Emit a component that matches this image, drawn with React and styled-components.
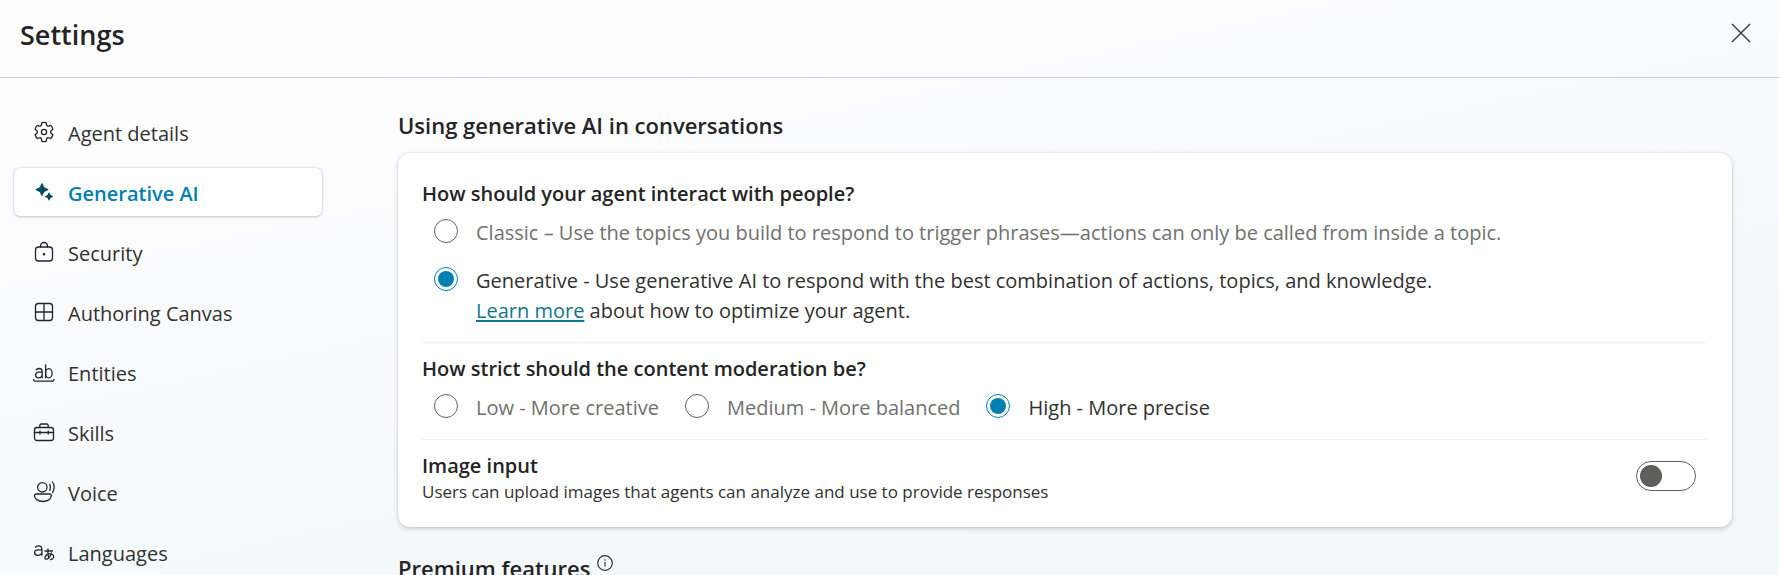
import React, { useState } from "react";
import styled, { createGlobalStyle } from "styled-components";

const color = {
  text: "#242424",
  body: "#323130",
  muted: "#707070",
  brand: "#0080ae",
  link: "#11758f",
  divider: "#f0f0f0",
};

const strong = 600;

const GlobalStyle = createGlobalStyle`
  *, *::before, *::after { box-sizing: border-box; }
  body {
    margin: 0;
    font-family: "Segoe UI", "Open Sans", "Noto Sans", sans-serif;
    font-size: 20px;
    line-height: 30px;
    color: ${color.body};
  }
`;

const Page = styled.div`
  height: 100vh;
  overflow: auto;
  scrollbar-width: none;
  background: linear-gradient(168deg, #fefefe 0%, #fcfcfe 24%, #f9fafe 46%, #f5f9fc 66%, #f2f7fa 100%);
`;

const Header = styled.header`
  display: flex;
  align-items: flex-start;
  justify-content: space-between;
  height: 78px;
  padding: 15px 20px 0;
  border-bottom: 1px solid #cccdce;
`;

const Title = styled.h1`
  margin: 0;
  font-size: 27px;
  line-height: 40px;
  font-weight: ${strong};
  color: ${color.text};
`;

const CloseButton = styled.button`
  display: grid;
  place-items: center;
  width: 36px;
  height: 36px;
  padding: 0;
  border: 0;
  background: none;
  color: #424242;
`;

const Body = styled.div`
  display: flex;
  align-items: flex-start;
  gap: 76px;
  padding: 30px 47px 40px 14px;
`;

const Nav = styled.nav`
  display: flex;
  flex-direction: column;
  flex: 0 0 308px;
  gap: 12px;
`;

const NavItem = styled.a`
  display: flex;
  align-items: center;
  gap: 12px;
  height: 48px;
  padding: 0 18px;
  border-radius: 6px;
  text-decoration: none;
  color: ${(p) => (p.$active ? color.brand : color.body)};
  font-weight: ${(p) => (p.$active ? strong : 400)};
  background: ${(p) => (p.$active ? "#fff" : "transparent")};
  box-shadow: ${(p) => (p.$active ? "0 0 2px rgba(0,0,0,.22), 0 1px 3px rgba(0,0,0,.16)" : "none")};

  svg {
    flex: none;
    color: ${(p) => (p.$active ? "#0b4a63" : color.text)};
  }
`;

const NavLabel = styled.span`
  padding-top: 3px;
`;

const Main = styled.main`
  flex: 1;
  min-width: 0;
  padding-top: 1px;
`;

const SectionTitle = styled.h2`
  display: flex;
  align-items: flex-start;
  gap: 7px;
  margin: 0 0 11px;
  font-size: 22px;
  line-height: 33px;
  font-weight: ${strong};
  color: ${color.text};
`;

const Card = styled.div`
  margin-bottom: 25px;
  padding: 15px 24px 22px;
  border-radius: 12px;
  background: #fff;
  box-shadow: 0 0 2px rgba(0, 0, 0, 0.14), 0 2px 5px rgba(0, 0, 0, 0.16);
`;

const Group = styled.fieldset`
  min-width: 0;
  margin: 0;
  padding: 11px 0 16px;
  border: 0;
  border-bottom: 1px solid ${color.divider};
`;

const Question = styled.legend`
  float: left;
  width: 100%;
  padding: 0;
  font-weight: ${strong};
  color: ${color.text};
`;

const Options = styled.div`
  clear: both;
  display: flex;
  flex-direction: ${(p) => (p.$inline ? "row" : "column")};
  gap: ${(p) => (p.$inline ? "26px" : "18px")};
  padding: 9px 12px 0;
`;

const Option = styled.label`
  display: flex;
  align-items: flex-start;
  gap: 18px;
  color: ${(p) => (p.$checked ? color.body : color.muted)};
`;

const Radio = styled.input`
  appearance: none;
  display: grid;
  place-items: center;
  flex: none;
  width: 24px;
  height: 24px;
  margin: 1px 0 0;
  border: 1px solid #616161;
  border-radius: 50%;

  &:checked { border-color: ${color.brand}; }
  &:checked::before {
    content: "";
    width: 16px;
    height: 16px;
    border-radius: 50%;
    background: ${color.brand};
  }
`;

const Link = styled.a`
  color: ${color.link};
  text-decoration: underline;
  text-decoration-thickness: 2px;
  text-underline-offset: 2px;
`;

const SwitchRow = styled.div`
  display: flex;
  align-items: flex-start;
  justify-content: space-between;
  padding: 11px 12px 0 0;
`;

const SwitchLabel = styled.label`
  display: block;
  font-weight: ${strong};
  color: ${color.text};
`;

const Hint = styled.p`
  margin: 0;
  font-size: 17px;
  line-height: 22px;
  padding-bottom: 2px;
`;

const Switch = styled.input`
  appearance: none;
  display: flex;
  align-items: center;
  flex: none;
  width: 60px;
  height: 30px;
  margin: 10px 0 0;
  padding: 0 3px;
  border: 1px solid #616161;
  border-radius: 15px;
  justify-content: ${(p) => (p.checked ? "flex-end" : "flex-start")};

  &::before {
    content: "";
    width: 22px;
    height: 22px;
    border-radius: 50%;
    background: #5f5e5c;
  }
`;

const InfoButton = styled.button`
  display: grid;
  padding: 0;
  margin-top: 3px;
  border: 0;
  background: none;
  color: ${color.body};
`;

const Icon = ({ children }) => (
  <svg width="24" height="24" viewBox="0 0 24 24" fill="none" stroke="currentColor" strokeWidth="1.3" strokeLinecap="round" strokeLinejoin="round" aria-hidden="true">
    {children}
  </svg>
);

const icons = {
  gear: (
    <>
      <path d="M9.9 2.7a9.6 9.6 0 0 1 4.2 0l.5 2.3a1.5 1.5 0 0 0 2 1.1l2.2-.7a9.6 9.6 0 0 1 2.1 3.7l-1.7 1.6a1.7 1.7 0 0 0 0 2.5l1.7 1.6a9.6 9.6 0 0 1-2.1 3.7l-2.2-.7a1.5 1.5 0 0 0-2 1.2l-.5 2.3a9.6 9.6 0 0 1-4.2 0l-.5-2.3a1.5 1.5 0 0 0-2-1.2l-2.2.7a9.6 9.6 0 0 1-2.1-3.7l1.7-1.6a1.7 1.7 0 0 0 0-2.5L3.1 9.1a9.6 9.6 0 0 1 2.1-3.7l2.2.7a1.5 1.5 0 0 0 2-1.1z" />
      <circle cx="12" cy="12" r="2.6" />
    </>
  ),
  sparkle: (
    <g fill="currentColor" stroke="none">
      <path d="M9.4 3.6q.6-.8 1.2 0l1.3 2.9q.4.8 1.2 1.2l2.9 1.3q.8.6 0 1.2l-2.9 1.3q-.8.4-1.2 1.2l-1.3 2.9q-.6.8-1.2 0l-1.3-2.9q-.4-.8-1.2-1.2L4 10.2q-.8-.6 0-1.2l2.9-1.3q.8-.4 1.2-1.2z" />
      <path d="M16.5 12.7q.5-.6 1 0l.8 1.8q.2.5.7.7l1.8.8q.6.5 0 1l-1.8.8q-.5.2-.7.7l-.8 1.8q-.5.6-1 0l-.8-1.8q-.2-.5-.7-.7l-1.8-.8q-.6-.5 0-1l1.8-.8q.5-.2.7-.7z" />
    </g>
  ),
  lock: (
    <>
      <rect x="3.5" y="7" width="17" height="14" rx="3" />
      <path d="M8.5 7V6a3.5 3.5 0 0 1 7 0v1" />
      <circle cx="12" cy="14.3" r="0.6" fill="currentColor" />
    </>
  ),
  grid: (
    <>
      <rect x="3.5" y="3.5" width="17" height="17" rx="3" />
      <path d="M12 3.5v17M3.5 12h17" />
    </>
  ),
  entities: (
    <>
      <path d="M4.2 9.8c1-1 2-1.3 3-1.3 2 0 3 1 3 3v6.3M10.2 12.2H6.8c-2 0-3.2 1-3.2 2.8s1.2 2.8 2.8 2.8c2 0 3.8-1.2 3.8-3.5M13.6 5v12.8" />
      <ellipse cx="16.8" cy="13.2" rx="3.3" ry="4.6" />
      <path d="M1.5 19.3c0 1.2.5 1.9 1.7 1.9h17.1c1.2 0 1.7-.7 1.7-1.9" />
    </>
  ),
  toolbox: (
    <>
      <rect x="2.5" y="7.5" width="19" height="13" rx="2.5" />
      <path d="M7.8 7.5V5.5q0-1.5 1.5-1.5h5.4q1.5 0 1.5 1.5v2M2.5 12.5h19M8 11v3M16.2 11v3" />
    </>
  ),
  voice: (
    <>
      <circle cx="10.3" cy="7.3" r="4.7" />
      <path d="M4.3 14h13.3a1.7 1.7 0 0 1 1.7 1.7c0 3.5-3.8 5.8-8.4 5.8s-8.4-2.3-8.4-5.8A1.7 1.7 0 0 1 4.3 14zM17.7 4.3q1.3 3 0 6.2M20.5 2q3.4 5.3 0 10.6" />
    </>
  ),
  languages: (
    <>
      <path d="M3.3 7.2C4.5 6.2 5.5 5.9 6.6 5.9c2.2 0 3.3 1.1 3.3 3.2v6.2M9.9 9.9H6.2c-2.3 0-3.6.9-3.6 2.7s1.2 2.7 2.9 2.7c2.4 0 4.4-1.3 4.4-3.5" />
      <path d="M13 11h7.5M16 9c-.3 3.5-.2 6.5.7 9.3M19.3 12.8c-.9 3.3-3 6.4-5.1 6.4-2.3 0-1.8-4.9 3.3-5.3 5.4-.2 5.3 5 1 5.8" />
    </>
  ),
};

const navItems = [
  ["Agent details", "gear"],
  ["Generative AI", "sparkle"],
  ["Security", "lock"],
  ["Authoring Canvas", "grid"],
  ["Entities", "entities"],
  ["Skills", "toolbox"],
  ["Voice", "voice"],
  ["Languages", "languages"],
];

function RadioOption({ name, value, selected, onSelect, children }) {
  return (
    <Option $checked={selected === value}>
      <Radio type="radio" name={name} value={value} checked={selected === value} onChange={() => onSelect(value)} />
      <span>{children}</span>
    </Option>
  );
}

export default function App() {
  const [mode, setMode] = useState("generative");
  const [moderation, setModeration] = useState("high");
  const [imageInput, setImageInput] = useState(false);

  return (
    <Page>
      <GlobalStyle />
      <Header>
        <Title>Settings</Title>
        <CloseButton type="button" aria-label="Close">
          <svg width="20" height="20" viewBox="0 0 20 20" stroke="currentColor" strokeWidth="1.5" aria-hidden="true">
            <path d="M1 1l18 18M19 1L1 19" />
          </svg>
        </CloseButton>
      </Header>
      <Body>
        <Nav aria-label="Settings">
          {navItems.map(([label, icon]) => (
            <NavItem key={label} href="#" $active={icon === "sparkle"} aria-current={icon === "sparkle" ? "page" : undefined}>
              <Icon>{icons[icon]}</Icon>
              <NavLabel>{label}</NavLabel>
            </NavItem>
          ))}
        </Nav>
        <Main>
          <SectionTitle>Using generative AI in conversations</SectionTitle>
          <Card>
            <Group>
              <Question>How should your agent interact with people?</Question>
              <Options>
                <RadioOption name="mode" value="classic" selected={mode} onSelect={setMode}>
                  Classic – Use the topics you build to respond to trigger phrases—actions can only be called from inside a topic.
                </RadioOption>
                <RadioOption name="mode" value="generative" selected={mode} onSelect={setMode}>
                  Generative - Use generative AI to respond with the best combination of actions, topics, and knowledge.
                  <br />
                  <Link href="#">Learn more</Link> about how to optimize your agent.
                </RadioOption>
              </Options>
            </Group>
            <Group>
              <Question>How strict should the content moderation be?</Question>
              <Options $inline>
                <RadioOption name="moderation" value="low" selected={moderation} onSelect={setModeration}>
                  Low - More creative
                </RadioOption>
                <RadioOption name="moderation" value="medium" selected={moderation} onSelect={setModeration}>
                  Medium - More balanced
                </RadioOption>
                <RadioOption name="moderation" value="high" selected={moderation} onSelect={setModeration}>
                  High - More precise
                </RadioOption>
              </Options>
            </Group>
            <SwitchRow>
              <div>
                <SwitchLabel htmlFor="image-input">Image input</SwitchLabel>
                <Hint id="image-input-hint">Users can upload images that agents can analyze and use to provide responses</Hint>
              </div>
              <Switch
                id="image-input"
                type="checkbox"
                role="switch"
                aria-describedby="image-input-hint"
                checked={imageInput}
                onChange={(e) => setImageInput(e.target.checked)}
              />
            </SwitchRow>
          </Card>
          <SectionTitle>
            Premium features
            <InfoButton type="button" aria-label="About premium features">
              <svg width="16" height="16" viewBox="0 0 16 16" fill="none" stroke="currentColor" aria-hidden="true">
                <circle cx="8" cy="8" r="7.3" strokeWidth="1.2" />
                <path d="M8 7v4.5" strokeWidth="1.2" />
                <circle cx="8" cy="5" r="0.8" fill="currentColor" stroke="none" />
              </svg>
            </InfoButton>
          </SectionTitle>
        </Main>
      </Body>
    </Page>
  );
}
